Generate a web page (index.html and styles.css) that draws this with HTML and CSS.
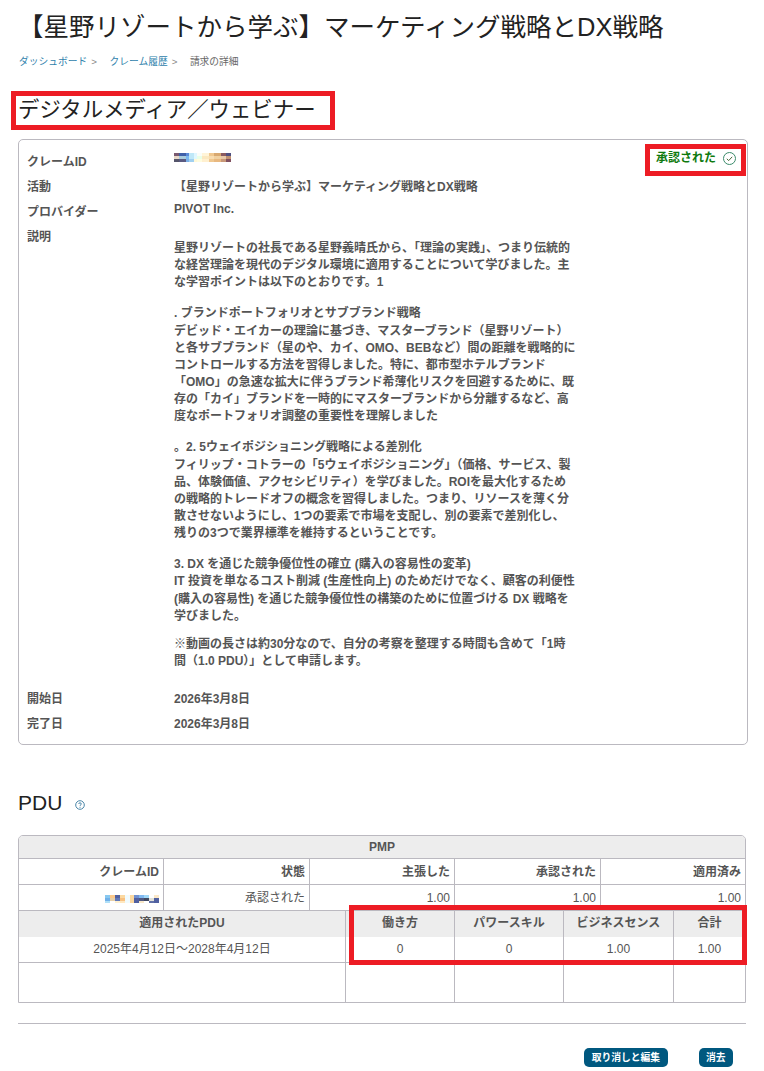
FILE: index.html
```html
<!DOCTYPE html>
<html lang="ja">
<head>
    <meta charset="UTF-8">
    <title>請求の詳細</title>
    <link rel="stylesheet" href="styles.css">
</head>
<body>
    <h1 class="page-title">【星野リゾートから学ぶ】マーケティング戦略とDX戦略</h1>

    <nav class="breadcrumb">
        <a href="#">ダッシュボード</a><span class="sep">&gt;</span>
        <a href="#">クレーム履歴</a><span class="sep">&gt;</span>
        <span class="current">請求の詳細</span>
    </nav>

    <h2 class="section-title">デジタルメディア／ウェビナー</h2>

    <section class="card">
        <div class="status">
            <span>承認された</span>
            <svg class="status-icon" width="13" height="13" viewBox="0 0 13 13" fill="none" stroke="#3a8a6a" stroke-width="1">
                <circle cx="6.5" cy="6.5" r="6"/>
                <path d="M3.8 6.8l1.9 1.8 3.5-3.8" stroke="#4a6a3a"/>
            </svg>
        </div>

        <div class="row">
            <div class="label">クレームID</div>
            <div class="value">
                <svg class="mosaic" width="57" height="9" viewBox="0 0 57 9" shape-rendering="crispEdges">
                    <rect width="5" height="3" fill="#7a5a70"/><rect y="3" width="5" height="3" fill="#e8d8c8"/><rect y="6" width="5" height="3" fill="#55556a"/>
                    <rect x="5" width="7" height="3" fill="#4060a8"/><rect x="5" y="3" width="7" height="3" fill="#aaccdd"/><rect x="5" y="6" width="7" height="3" fill="#5a5a80"/>
                    <rect x="12" width="3" height="3" fill="#5a8ad8"/><rect x="12" y="3" width="3" height="3" fill="#7ab8f0"/><rect x="12" y="6" width="3" height="3" fill="#7ab0e8"/>
                    <rect x="15" width="5" height="3" fill="#bfe8f8"/><rect x="15" y="3" width="5" height="3" fill="#c0e8f8"/><rect x="15" y="6" width="5" height="3" fill="#a0d0f0"/>
                    <rect x="20" width="3" height="3" fill="#dff6ff"/><rect x="20" y="3" width="3" height="3" fill="#e0f8ff"/><rect x="20" y="6" width="3" height="3" fill="#fff8d8"/>
                    <rect x="23" width="5" height="3" fill="#fbfdf8"/><rect x="23" y="3" width="5" height="3" fill="#e8ffe8"/><rect x="23" y="6" width="5" height="3" fill="#fffde0"/>
                    <rect x="28" width="7" height="3" fill="#fff4d8"/><rect x="28" y="3" width="7" height="3" fill="#fbe8c0"/><rect x="28" y="6" width="7" height="3" fill="#fff0d0"/>
                    <rect x="35" width="5" height="3" fill="#f0c890"/><rect x="35" y="3" width="5" height="3" fill="#f8dcb0"/><rect x="35" y="6" width="5" height="3" fill="#f0c890"/>
                    <rect x="40" width="7" height="3" fill="#d8a870"/><rect x="40" y="3" width="7" height="3" fill="#f0d0a0"/><rect x="40" y="6" width="7" height="3" fill="#e8b880"/>
                    <rect x="47" width="5" height="3" fill="#8a5a60"/><rect x="47" y="3" width="5" height="3" fill="#e8c8a8"/><rect x="47" y="6" width="5" height="3" fill="#c89878"/>
                    <rect x="52" width="5" height="3" fill="#505080"/><rect x="52" y="3" width="5" height="3" fill="#c09070"/><rect x="52" y="6" width="5" height="3" fill="#805060"/>
                </svg>
            </div>
        </div>
        <div class="row">
            <div class="label">活動</div>
            <div class="value">【星野リゾートから学ぶ】マーケティング戦略とDX戦略</div>
        </div>
        <div class="row">
            <div class="label">プロバイダー</div>
            <div class="value value-tight">PIVOT Inc.</div>
        </div>
        <div class="row">
            <div class="label">説明</div>
            <div class="value description">
                <p>星野リゾートの社長である星野義晴氏から、「理論の実践」、つまり伝統的な経営理論を現代のデジタル環境に適用することについて学びました。主な学習ポイントは以下のとおりです。1</p>
                <p>. ブランドポートフォリオとサブブランド戦略<br>デビッド・エイカーの理論に基づき、マスターブランド（星野リゾート）と各サブブランド（星のや、カイ、OMO、BEBなど）間の距離を戦略的にコントロールする方法を習得しました。特に、都市型ホテルブランド「OMO」の急速な拡大に伴うブランド希薄化リスクを回避するために、既存の「カイ」ブランドを一時的にマスターブランドから分離するなど、高度なポートフォリオ調整の重要性を理解しました</p>
                <p>。2. 5ウェイポジショニング戦略による差別化<br>フィリップ・コトラーの「5ウェイポジショニング」（価格、サービス、製品、体験価値、アクセシビリティ）を学びました。ROIを最大化するための戦略的トレードオフの概念を習得しました。つまり、リソースを薄く分散させないようにし、1つの要素で市場を支配し、別の要素で差別化し、残りの3つで業界標準を維持するということです。</p>
                <p class="para-short">3. DX を通じた競争優位性の確立 (購入の容易性の変革)<br>IT 投資を単なるコスト削減 (生産性向上) のためだけでなく、顧客の利便性 (購入の容易性) を通じた競争優位性の構築のために位置づける DX 戦略を学びました。</p>
                <p>※動画の長さは約30分なので、自分の考察を整理する時間も含めて「1時間（1.0 PDU）」として申請します。</p>
            </div>
        </div>
        <div class="row">
            <div class="label">開始日</div>
            <div class="value">2026年3月8日</div>
        </div>
        <div class="row">
            <div class="label">完了日</div>
            <div class="value">2026年3月8日</div>
        </div>
    </section>

    <h2 class="pdu-title">PDU
        <svg class="help-icon" width="10" height="10" viewBox="0 0 10 10" fill="none" stroke="#4a86a8">
            <circle cx="5" cy="5" r="4.3"/>
            <path d="M3.7 4c0-1.6 2.6-1.6 2.6 0 0 .9-1.3.9-1.3 1.9M5 6.8v1"/>
        </svg>
    </h2>

    <section class="pdu-table">
        <div class="pmp-head">PMP</div>
        <div class="grid-top">
            <div class="cell th">クレームID</div>
            <div class="cell th">状態</div>
            <div class="cell th">主張した</div>
            <div class="cell th">承認された</div>
            <div class="cell th">適用済み</div>
            <div class="cell td">
                <svg class="mosaic-small" width="54" height="8" viewBox="0 0 54 8" shape-rendering="crispEdges">
                    <rect width="5" height="3" fill="#88c8f0"/><rect y="3" width="5" height="3" fill="#70b0e8"/><rect y="6" width="5" height="2" fill="#b0e0f8"/>
                    <rect x="5" width="5" height="3" fill="#fbc88a"/><rect x="5" y="3" width="5" height="3" fill="#e8d0a8"/>
                    <rect x="10" width="5" height="3" fill="#5060a0"/><rect x="10" y="3" width="5" height="3" fill="#6078b8"/><rect x="10" y="6" width="5" height="2" fill="#fff0d0"/>
                    <rect x="15" width="5" height="3" fill="#fbd8a0"/><rect x="15" y="3" width="5" height="3" fill="#f8c080"/><rect x="15" y="6" width="5" height="2" fill="#ffe8c0"/>
                    <rect x="20" width="5" height="8" fill="#f0fbff"/>
                    <rect x="25" width="4" height="8" fill="#fbd8a0"/>
                    <rect x="29" width="5" height="3" fill="#7090d0"/><rect x="29" y="3" width="5" height="5" fill="#5060a0"/>
                    <rect x="34" width="5" height="3" fill="#80b8f0"/><rect x="34" y="3" width="5" height="3" fill="#505880"/><rect x="34" y="6" width="5" height="2" fill="#f8e8c8"/>
                    <rect x="39" width="5" height="3" fill="#a0d8f8"/><rect x="39" y="3" width="5" height="3" fill="#404860"/>
                    <rect x="44" y="3" width="5" height="3" fill="#e0e0d8"/><rect x="44" y="6" width="5" height="2" fill="#6070a8"/>
                    <rect x="49" y="0" width="5" height="3" fill="#fbe8c8"/><rect x="49" y="3" width="5" height="5" fill="#5060a0"/>
                </svg>
            </div>
            <div class="cell td">承認された</div>
            <div class="cell td">1.00</div>
            <div class="cell td">1.00</div>
            <div class="cell td">1.00</div>
        </div>
        <div class="grid-bottom">
            <div class="cell head">適用されたPDU</div>
            <div class="cell head">働き方</div>
            <div class="cell head">パワースキル</div>
            <div class="cell head">ビジネスセンス</div>
            <div class="cell head">合計</div>
            <div class="cell center">2025年4月12日～2028年4月12日</div>
            <div class="cell center">0</div>
            <div class="cell center">0</div>
            <div class="cell center">1.00</div>
            <div class="cell center">1.00</div>
            <div class="cell empty"></div>
            <div class="cell empty"></div>
            <div class="cell empty"></div>
            <div class="cell empty"></div>
            <div class="cell empty"></div>
        </div>
    </section>

    <hr class="divider">

    <div class="actions">
        <a href="#" class="btn">取り消しと編集</a>
        <a href="#" class="btn">消去</a>
    </div>

    <!-- red annotation boxes drawn over the screenshot -->
    <div class="mark mark-title"></div>
    <div class="mark mark-status"></div>
    <div class="mark mark-table"></div>
</body>
</html>
```

FILE: styles.css
```css
* {
    margin: 0;
    padding: 0;
    box-sizing: border-box;
}

html, body {
    height: 1071px;
    overflow: hidden;
}

body {
    position: relative;
    padding: 0 16px 0 18px;
    background: #fff;
    font-family: "Liberation Sans", "Noto Sans CJK JP", sans-serif;
    font-size: 12px;
    color: #555;
}

.page-title {
    padding-top: 11px;
    font-size: 25.5px;
    line-height: 32px;
    font-weight: 400;
    color: #222;
    white-space: nowrap;
}

.breadcrumb {
    display: flex;
    align-items: center;
    margin-top: 12px;
    padding-left: 1px;
    font-size: 9.75px;
    line-height: 14px;
}

.breadcrumb a {
    color: #2f82ac;
    text-decoration: none;
}

.breadcrumb .sep {
    margin: 0 12.5px 0 4px;
    color: #888;
}

.breadcrumb .current {
    color: #666;
}

.section-title {
    margin-top: 26px;
    font-size: 21.4px;
    line-height: 30px;
    font-weight: 400;
    color: #222;
}

.card {
    position: relative;
    margin-top: 14px;
    padding: 10px 8px 7px;
    border: 1px solid #bbb9c0;
    border-radius: 5px;
}

.status {
    position: absolute;
    top: 9px;
    right: 11px;
    display: flex;
    align-items: center;
    gap: 7px;
    font-weight: 700;
    color: #0e7a0e;
    line-height: 18px;
}

.row {
    display: flex;
    min-height: 25px;
    font-weight: 700;
    line-height: 25px;
}

.label {
    flex: 0 0 147px;
}

.value {
    flex: 1;
    line-height: 18px;
    padding-top: 3px;
}

.value-tight {
    padding-top: 0;
}

.mosaic {
    display: block;
    margin-top: 0;
}

.description {
    flex: 0 0 402px;
    width: 402px;
    padding-top: 15px;
    line-height: 17.14px;
}

.description p {
    margin-bottom: 14px;
}

.description .para-short {
    margin-bottom: 11px;
}

.description p:last-child {
    margin-bottom: 17px;
}

.pdu-title {
    margin-top: 43px;
    font-size: 21px;
    line-height: 30px;
    font-weight: 400;
    color: #222;
}

.help-icon {
    margin-left: 7px;
}

.pdu-table {
    margin: 17px 2px 0 0;
    border: 1px solid #bbb9c0;
    border-radius: 5px 5px 0 0;
    overflow: hidden;
}

.pmp-head {
    height: 23px;
    line-height: 22px;
    text-align: center;
    font-weight: 700;
    background: #ededed;
    border-bottom: 1px solid #bbb9c0;
}

.cell {
    padding: 0 4px;
}

.grid-top {
    display: grid;
    grid-template-columns: 144px 146px 145px 146px 1fr;
}

.grid-top .cell {
    height: 26px;
    line-height: 26px;
    text-align: right;
    border-left: 1px solid #bbb9c0;
    border-bottom: 1px solid #bbb9c0;
}

.grid-top .cell:nth-child(5n+1) {
    border-left: 0;
}

.grid-top .th {
    font-weight: 700;
}

.mosaic-small {
    vertical-align: -1px;
}

.grid-bottom {
    display: grid;
    grid-template-columns: 326px 109px 109px 110px 1fr;
}

.grid-bottom .cell {
    text-align: center;
    border-left: 1px solid #bbb9c0;
}

.grid-bottom .cell:nth-child(5n+1) {
    border-left: 0;
}

.head {
    height: 26px;
    line-height: 25px;
    font-weight: 700;
    background: #ededed;
}

.center {
    height: 26px;
    line-height: 25px;
    border-bottom: 1px solid #bbb9c0;
}

.empty {
    height: 39px;
}

.divider {
    margin: 20px 2px 0 0;
    border: 0;
    border-top: 1px solid #bbb9c0;
}

.actions {
    display: flex;
    justify-content: flex-end;
    gap: 31px;
    margin-top: 24px;
    padding-right: 15px;
}

.btn {
    height: 19px;
    padding: 0 7.5px;
    line-height: 19px;
    font-size: 9.75px;
    font-weight: 700;
    color: #fff;
    background: #00587f;
    border-radius: 5px;
    text-decoration: none;
}

.mark {
    position: absolute;
    border: 5px solid #ed1c24;
}

.mark-title {
    left: 11px;
    top: 91px;
    width: 324px;
    height: 39px;
}

.mark-status {
    left: 645px;
    top: 144px;
    width: 101px;
    height: 32px;
}

.mark-table {
    left: 349px;
    top: 905px;
    width: 398px;
    height: 60px;
}
```
